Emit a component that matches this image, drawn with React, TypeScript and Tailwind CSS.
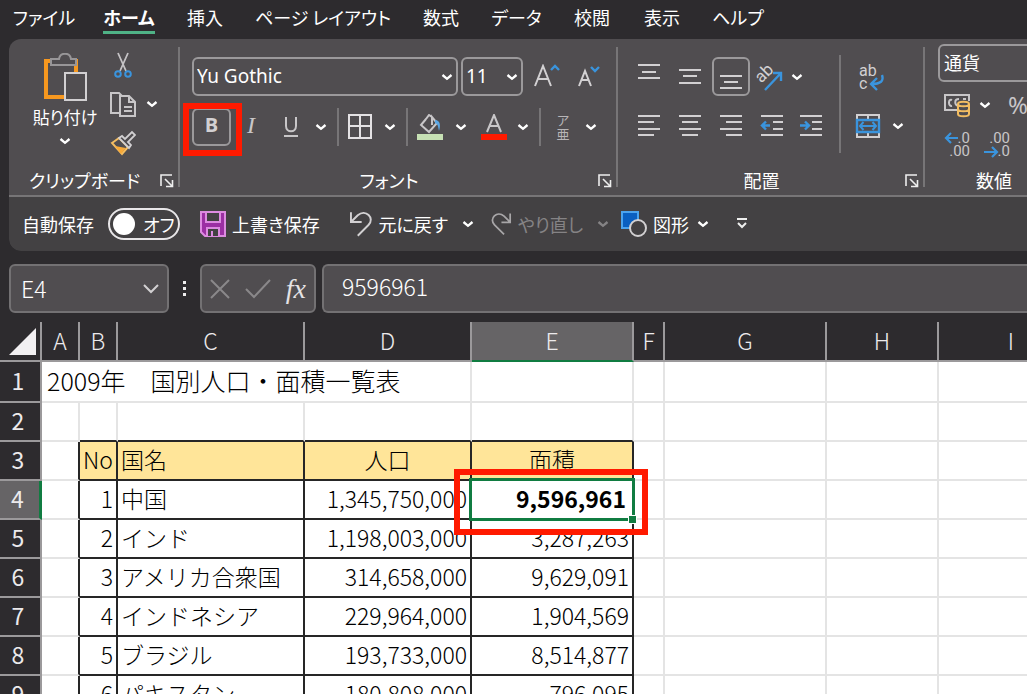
import React from "react";
import cn from "clsx";

// Shared pieces
function Chevron({ className }: { className?: string }) {
  return (
    <svg aria-hidden="true" className={cn("h-2 w-3 shrink-0", className)} fill="none" viewBox="0 0 12 8">
      <path d="M1.5 2 6 5.8 10.5 2" stroke="currentColor" strokeWidth="2.4" />
    </svg>
  );
}

function Launcher({ label }: { label: string }) {
  return (
    <button aria-label={label} className="shrink-0" type="button">
      <svg className="size-[14px]" fill="none" stroke="#eee" strokeWidth="1.6" viewBox="0 0 14 14">
        <path d="M1 12V1h11M5 5l7 7M12.5 6v6.5H6" />
      </svg>
    </button>
  );
}

function IconButton(props: React.ComponentPropsWithoutRef<"button">) {
  const { children, className, ...rest } = props;
  return (
    <button className={cn("flex items-center justify-center", className)} type="button" {...rest}>
      {children}
    </button>
  );
}

function Separator({ className }: { className?: string }) {
  return <span className={cn("w-[2px] justify-self-center bg-[#777577]", className)} />;
}

interface IGroupProps {
  title: string;
  className?: string;
  launcher?: boolean;
  children: React.ReactNode;
}

function Group({ title, className, launcher = true, children }: IGroupProps) {
  return (
    <section aria-label={title} className={cn("flex shrink-0 flex-col", className)}>
      <div className="h-[128px]">{children}</div>
      <div className="flex h-7 items-center pr-1">
        <h2 className="flex-1 pb-[2px] text-center text-lg leading-6">{title}</h2>
        {launcher && <Launcher label={`${title}の設定`} />}
      </div>
    </section>
  );
}

// Ribbon tabs
const TABS = [
  { label: "ファイル", width: "w-[58px]" },
  { label: "ホーム", width: "w-[52px]", active: true },
  { label: "挿入", width: "w-10" },
  { label: "ページ レイアウト", width: "w-[136px]" },
  { label: "数式", width: "w-10" },
  { label: "データ", width: "w-[51px]" },
  { label: "校閲", width: "w-10" },
  { label: "表示", width: "w-10" },
  { label: "ヘルプ", width: "w-[52px]" },
];

function RibbonTabs() {
  return (
    <nav className="flex h-[39px] items-start gap-[30px] overflow-hidden pl-[15px]">
      {TABS.map(({ label, width, active }) => (
        <a
          className={cn("flex h-[34px] shrink-0 justify-center whitespace-nowrap text-lg leading-[34px]", width, {
            "border-b-[3px] border-[#4fb286] font-bold": active,
          })}
          href="#"
          key={label}
        >
          {label}
        </a>
      ))}
    </nav>
  );
}

// Clipboard
function ClipboardGroup() {
  return (
    <Group className="w-[169px]" title="クリップボード">
      <div className="flex pl-4">
        <button className="flex w-[78px] flex-col items-center pl-[2px] pt-[14px]" type="button">
          <svg aria-hidden="true" className="h-[50px] w-[46px]" fill="none" viewBox="0 0 46 50">
            <path d="M12 8H4v36h18M27 8h7v12" stroke="#f7981f" strokeWidth="4" />
            <path d="M12 6h5c1-7 11-7 12 0h5v6H9V6z" fill="#504d50" stroke="#989698" strokeWidth="2" />
            <path d="M23 20h21v27H23z" fill="#504d50" stroke="#d2d0d2" strokeWidth="2" />
          </svg>
          <span className="text-[17px] leading-7">貼り付け</span>
          <Chevron className="mt-[6px]" />
        </button>
        <div className="flex flex-col pl-1 pt-2">
          <IconButton aria-label="切り取り" className="h-9 w-8">
            <svg className="h-[26px] w-[18px]" fill="none" strokeWidth="1.8" viewBox="0 0 18 26">
              <path d="M4 1l8 18M14 1 6 19" stroke="#c4c2c4" />
              <circle cx="4" cy="22" r="2.8" stroke="#3a94dd" strokeWidth="2" />
              <circle cx="14" cy="22" r="2.8" stroke="#3a94dd" strokeWidth="2" />
            </svg>
          </IconButton>
          <div className="flex h-[42px] items-center">
            <IconButton aria-label="コピー" className="h-9 w-8">
              <svg className="h-[26px] w-[28px]" fill="none" stroke="#c8c6c8" strokeWidth="2" viewBox="0 0 28 26">
                <path d="M10 22H2V2h8l4 4" />
                <path d="M11 5h9l6 6v14H11zM20 5v6h6M15 16h8M15 20h8" fill="#504d50" />
              </svg>
            </IconButton>
            <IconButton aria-label="コピーのオプション" className="w-[26px]">
              <Chevron />
            </IconButton>
          </div>
          <IconButton aria-label="書式のコピー/貼り付け" className="h-9 w-8">
            <svg className="size-[26px]" fill="none" viewBox="0 0 26 26">
              <path d="M2 13 9 8l9 9-6 7z" fill="#504d50" stroke="#f3bd62" strokeWidth="2" />
              <path d="m5 16 11 2-5 6z" fill="#f7a938" />
              <path d="m9 8 3-2 3 3 7-7 3 3-7 7 3 3-2 3z" fill="#504d50" stroke="#d2d0d2" strokeWidth="1.8" />
            </svg>
          </IconButton>
        </div>
      </div>
    </Group>
  );
}

// Font
const BOX = "rounded-md border-2 border-[#9b999b]";

function FontGroup() {
  return (
    <Group className="w-[436px]" title="フォント">
      <div className="flex items-center pl-3 pt-[18px]">
        <div className={cn("flex h-[39px] w-[266px] items-center px-[3px]", BOX)}>
          <select aria-label="フォント名" className="flex-1 appearance-none font-['Noto_Sans'] text-[19px] outline-none">
            <option>Yu Gothic</option>
          </select>
          <Chevron />
        </div>
        <div className={cn("ml-[3px] flex h-[39px] w-[62px] items-center px-[3px]", BOX)}>
          <select aria-label="フォント サイズ" className="w-9 flex-1 appearance-none font-['Noto_Sans'] text-[19px] outline-none">
            <option>11</option>
          </select>
          <Chevron />
        </div>
        <IconButton aria-label="フォント サイズの拡大" className="ml-1 h-8 w-10">
          <svg className="h-[26px] w-[28px]" fill="none" strokeWidth="2" viewBox="0 0 28 26">
            <path d="M2 22 10 2l8 20M5 15h10" stroke="#d2d0d2" />
            <path d="m18 6 4-4 4 4" stroke="#3a94dd" strokeWidth="2.400" />
          </svg>
        </IconButton>
        <IconButton aria-label="フォント サイズの縮小" className="ml-1 h-8 w-9">
          <svg className="h-[26px] w-[26px]" fill="none" strokeWidth="2" viewBox="0 0 26 26">
            <path d="M3 22 9 7l6 15M5 16h8" stroke="#d2d0d2" />
            <path d="m15 3 4 4 4-4" stroke="#3a94dd" strokeWidth="2.400" />
          </svg>
        </IconButton>
      </div>
      <div className="grid grid-cols-[39px_40px_40px_20px_14px_30px_30px_4px_42px_19px_48px_10px_24px_22px_34px] items-center pl-3 pt-3">
        <div className="relative">
          <IconButton
            aria-pressed="true"
            className={cn("h-[38px] w-[39px] pb-1 font-['Open_Sans'] text-xl font-bold text-[#d2d0d2]", BOX)}
          >
            B
          </IconButton>
          <span className="pointer-events-none absolute -bottom-[10px] -left-[9px] -right-[11px] -top-[5px] border-[6px] border-[#ff1a00]" />
        </div>
        <IconButton className="pb-1 font-['Liberation_Serif'] text-2xl italic text-[#c8c6c8]">I</IconButton>
        <IconButton aria-label="下線">
          <svg className="h-6 w-4" fill="none" stroke="#c8c6c8" strokeWidth="2" viewBox="0 0 16 24">
            <path d="M3 2v9c0 7 10 7 10 0V2M1 21h14" />
          </svg>
        </IconButton>
        <IconButton aria-label="下線の種類">
          <Chevron />
        </IconButton>
        <Separator className="h-[38px]" />
        <IconButton aria-label="罫線">
          <svg className="size-[26px]" fill="none" stroke="#e4e2e4" strokeWidth="2" viewBox="0 0 26 26">
            <path d="M2 1h22v23H2zM13 1v23M2 12h22" />
          </svg>
        </IconButton>
        <IconButton aria-label="罫線の種類">
          <Chevron />
        </IconButton>
        <Separator className="h-[38px]" />
        <IconButton aria-label="塗りつぶしの色">
          <svg className="size-[26px]" fill="none" viewBox="0 0 26 26">
            <path d="M9 5 4 11l8 7 8-9-5-6v8M9 5l3-4 3 2" stroke="#c8c6c8" strokeWidth="2" />
            <path d="M18 6c5 0 6 5 4 11-1-5-1-7-4-8z" fill="#5ba8e6" />
            <path d="M0 20h26v6H0z" fill="#c6e0b4" />
          </svg>
        </IconButton>
        <IconButton aria-label="塗りつぶしの色の選択">
          <Chevron />
        </IconButton>
        <IconButton aria-label="フォントの色">
          <svg className="size-[26px]" fill="none" viewBox="0 0 26 26">
            <path d="M6 18 13 1l7 17M9 12h8" stroke="#c8c6c8" strokeWidth="2" />
            <path d="M0 20h26v6H0z" fill="#ff1a00" />
          </svg>
        </IconButton>
        <IconButton aria-label="フォントの色の選択">
          <Chevron />
        </IconButton>
        <Separator className="h-[38px]" />
        <IconButton className="flex-col text-[13px] leading-[14px] text-[#b8b6b8]">
          <span>ア</span>
          <span>亜</span>
        </IconButton>
        <IconButton aria-label="ふりがなのオプション">
          <Chevron />
        </IconButton>
      </div>
    </Group>
  );
}

// Alignment
function Lines({ d, children }: { d: string; children?: React.ReactNode }) {
  return (
    <svg aria-hidden="true" className="h-[26px] w-[24px]" fill="none" viewBox="0 0 24 26">
      <path d={d} stroke="#d2d0d2" strokeWidth="2" />
      {children}
    </svg>
  );
}

function AlignmentGroup() {
  return (
    <Group className="w-[305px]" title="配置">
      <div className="flex items-start">
        <div className="pl-[10px] pt-[18px]">
          <div className="grid grid-cols-[41px_41px_41px_41px_10px] items-center justify-items-center">
            <IconButton aria-label="上揃え">
              <Lines d="M1 1h22M5 8h14M1 14h22" />
            </IconButton>
            <IconButton aria-label="上下中央揃え">
              <Lines d="M1 6h22M5 12h14M1 19h22" />
            </IconButton>
            <IconButton aria-label="下揃え" aria-pressed="true" className={cn("h-[39px] w-[38px]", BOX)}>
              <Lines d="M1 12h22M5 18h14M1 24h22" />
            </IconButton>
            <IconButton aria-label="方向" className="pr-1">
              <svg className="size-[30px] overflow-visible" fill="none" viewBox="0 0 30 30">
                <text fill="#d2d0d2" fontFamily="Roboto" fontSize="17" transform="rotate(-45 9 19)" x="5" y="19">
                  ab
                </text>
                <path d="M10 28 26 11M18 11h8v8" stroke="#3a94dd" strokeWidth="2.400" />
              </svg>
            </IconButton>
            <IconButton aria-label="方向のオプション">
              <Chevron />
            </IconButton>
          </div>
          <div className="grid h-[50px] grid-cols-[41px_41px_41px_41px_38px] items-center justify-items-center pt-[10px]">
            <IconButton aria-label="左揃え">
              <Lines d="M1 3h22M1 9h16M1 16h22M1 22h16" />
            </IconButton>
            <IconButton aria-label="中央揃え">
              <Lines d="M1 3h22M4 9h16M1 16h22M4 22h16" />
            </IconButton>
            <IconButton aria-label="右揃え">
              <Lines d="M1 3h22M7 9h16M1 16h22M7 22h16" />
            </IconButton>
            <IconButton aria-label="インデントを減らす">
              <Lines d="M1 3h22M13 9h10M13 16h10M1 22h22">
                <path d="M10 12.500H3M6 8.500l-4 4 4 4" stroke="#3a94dd" strokeWidth="2.400" />
              </Lines>
            </IconButton>
            <IconButton aria-label="インデントを増やす">
              <Lines d="M1 3h22M13 9h10M13 16h10M1 22h22">
                <path d="M1 12.500h8M6 8.500l4 4-4 4" stroke="#3a94dd" strokeWidth="2.400" />
              </Lines>
            </IconButton>
          </div>
        </div>
        <Separator className="ml-[9px] mt-4 h-[98px]" />
        <div className="pl-[14px] pt-[18px]">
          <IconButton aria-label="折り返して全体を表示する" className="relative h-[39px] w-[30px]">
            <span className="w-[22px] text-left font-['Roboto'] text-[16px] leading-[13px] text-[#d2d0d2]">
              ab
              <br />c
            </span>
            <svg className="absolute bottom-[5px] right-0 h-[17px] w-4" fill="none" viewBox="0 0 16 17">
              <path d="M13 1c2 6-1 9-11 9M8 4 2 10l6 6" stroke="#3a94dd" strokeWidth="2.400" />
            </svg>
          </IconButton>
          <div className="flex h-[50px] items-center gap-[11px] pt-[10px]">
            <IconButton aria-label="セルを結合して中央揃え">
              <svg className="h-[26px] w-[26px]" fill="none" viewBox="0 0 26 26">
                <path d="M2 6V2h22v4M2 20v4h22v-4M13 2v4M13 20v4" stroke="#d2d0d2" strokeWidth="2" />
                <path d="M2 7h22v12H2z" stroke="#3a94dd" strokeWidth="2.400" />
                <path d="M5 13h16M8.500 9 5 13l3.500 4M17.500 9l3.500 4-3.500 4" stroke="#3a94dd" strokeWidth="2" />
              </svg>
            </IconButton>
            <IconButton aria-label="結合のオプション">
              <Chevron />
            </IconButton>
          </div>
        </div>
      </div>
    </Group>
  );
}

// Number format
function DecimalDigits({ top, bottom }: { top: string; bottom: string }) {
  return (
    <span className="w-[26px] text-right font-['Roboto'] text-[15px] leading-[13px] text-[#c8c6c8]">
      {top}
      <br />
      {bottom}
    </span>
  );
}

function NumberGroup() {
  return (
    <Group className="w-[142px]" launcher={false} title="数値">
      <div className="pl-[13px] pt-[5px]">
        <div className={cn("flex h-[38px] w-[180px] items-center px-1 pb-[2px]", BOX)}>
          <select aria-label="表示形式" className="flex-1 appearance-none text-lg outline-none">
            <option>通貨</option>
          </select>
        </div>
        <div className="flex h-[46px] items-center pl-[6px]">
          <IconButton aria-label="通貨表示形式">
            <svg className="size-[26px]" fill="none" viewBox="0 0 26 26">
              <path d="M15 18H1V3h24v6" stroke="#c8c6c8" strokeWidth="2" />
              <path d="M8 8c-4-2-4 7 0 6M15 14c-5-1-5-7 0-7M19 7h3" stroke="#c8c6c8" strokeWidth="2" />
              <path
                d="M14 12v10c0 3 11 3 11 0V12c0-3-11-3-11 0 0 3 11 3 11 0M14 17c0 3 11 3 11 0"
                fill="#504d50"
                stroke="#f3bd62"
                strokeWidth="2"
              />
            </svg>
          </IconButton>
          <IconButton aria-label="通貨の選択" className="w-[30px]">
            <Chevron />
          </IconButton>
          <IconButton className="ml-2 font-['Noto_Sans'] text-2xl text-[#c8c6c8]">%</IconButton>
        </div>
        <div className="flex h-[34px] items-center gap-[14px] pl-[6px]">
          <IconButton aria-label="小数点以下の表示桁数を増やす" className="relative">
            <DecimalDigits bottom=".00" top=".0" />
            <svg className="absolute left-0 top-0 h-3 w-[15px]" fill="none" viewBox="0 0 15 12">
              <path d="M14 6H2M7 1 2 6l5 5" stroke="#3a94dd" strokeWidth="2.200" />
            </svg>
          </IconButton>
          <IconButton aria-label="小数点以下の表示桁数を減らす" className="relative">
            <DecimalDigits bottom=".0" top=".00" />
            <svg className="absolute bottom-0 left-0 h-3 w-[15px]" fill="none" viewBox="0 0 15 12">
              <path d="M0 6h13M8 1l5 5-5 5" stroke="#3a94dd" strokeWidth="2.200" />
            </svg>
          </IconButton>
        </div>
      </div>
    </Group>
  );
}

// Quick access toolbar
function QuickAccess() {
  return (
    <div className="flex h-[54px] items-center overflow-hidden whitespace-nowrap rounded-bl-xl bg-[#434143] pl-[13px] text-lg">
      <label className="flex w-[158px] items-center justify-between">
        自動保存
        <input className="sr-only" role="switch" type="checkbox" />
        <span className="flex h-8 w-[72px] items-center gap-2 rounded-full border-2 border-[#e8e6e8] pl-[3px]">
          <span className="size-[22px] rounded-full bg-white" />
          オフ
        </span>
      </label>
      <button className="ml-5 flex w-[121px] items-center gap-[6px]" type="button">
        <svg aria-hidden="true" className="size-[26px]" fill="#9b2fa3" stroke="#dc8be0" strokeWidth="2" viewBox="0 0 26 26">
          <path d="M1 1h24v24H5l-4-4z" />
          <path d="M6 1h14v10H6zM7 25v-8h12v8" fill="#434143" />
          <path d="M12 20v5" />
        </svg>
        上書き保存
      </button>
      <button className="ml-[28px] flex w-[99px] items-center gap-[6px]" type="button">
        <svg aria-hidden="true" className="h-[28px] w-[24px]" fill="none" stroke="#d2d0d2" strokeWidth="2" viewBox="0 0 24 28">
          <path d="M2 2v10h11M2 12 9 5c8-7 18 3 11 10L9 26" />
        </svg>
        元に戻す
      </button>
      <IconButton aria-label="元に戻す履歴" className="ml-[14px]">
        <Chevron />
      </IconButton>
      <button className="ml-[17px] flex w-[92px] items-center gap-[6px] text-[#858385]" type="button">
        <svg aria-hidden="true" className="h-[28px] w-[24px]" fill="none" stroke="#a8a6a8" strokeWidth="2" viewBox="0 0 24 28">
          <path d="M22 2v10H12M22 12l-7-7C7-2-3 8 4 15l11 11" />
        </svg>
        やり直し
      </button>
      <IconButton aria-label="やり直し履歴" className="ml-[14px] text-[#858385]">
        <Chevron />
      </IconButton>
      <button className="ml-3 flex w-[72px] items-center gap-[6px]" type="button">
        <svg aria-hidden="true" className="h-[28px] w-[26px]" viewBox="0 0 26 28">
          <path d="M1 2h16v16H1z" fill="#0a5fc0" stroke="#4ba3ee" strokeWidth="2" />
          <circle cx="17" cy="18" fill="#434143" r="8" stroke="#d2d0d2" strokeWidth="2" />
        </svg>
        図形
      </button>
      <IconButton aria-label="図形の選択" className="ml-1">
        <Chevron />
      </IconButton>
      <IconButton aria-label="ツール バーのカスタマイズ" className="ml-[27px]">
        <svg className="h-[12px] w-3" fill="none" stroke="#eee" strokeWidth="2" viewBox="0 0 12 12">
          <path d="M1 1h10M2 5l4 4 4-4" />
        </svg>
      </IconButton>
    </div>
  );
}

// Name box and formula input
function FormulaBar() {
  const box = "h-[49px] shrink-0 rounded-md border-2 border-[#737173] bg-[#504d50]";
  return (
    <div className="flex items-center pl-[9px] pt-[13px]">
      <div className={cn("flex w-40 items-center pl-[10px] pr-2", box)}>
        <input aria-label="名前ボックス" className="min-w-0 flex-1 text-[23px] font-light outline-none" defaultValue="E4" />
        <svg aria-hidden="true" className="h-[10px] w-4" fill="none" stroke="#d2d0d2" strokeWidth="2" viewBox="0 0 16 10">
          <path d="m1 1 7 7 7-7" />
        </svg>
      </div>
      <svg aria-hidden="true" className="mx-[13px] h-[18px] w-[5px]" fill="#eee" viewBox="0 0 5 18">
        <path d="M1 1h3v3H1zM1 7h3v3H1zM1 13h3v3H1z" />
      </svg>
      <div className={cn("flex w-[116px] items-center justify-between px-2", box)}>
        <IconButton aria-label="キャンセル">
          <svg className="size-5" fill="none" stroke="#8a888a" strokeWidth="2" viewBox="0 0 20 20">
            <path d="m1 1 18 18M19 1 1 19" />
          </svg>
        </IconButton>
        <IconButton aria-label="入力">
          <svg className="h-5 w-[26px]" fill="none" stroke="#8a888a" strokeWidth="2" viewBox="0 0 26 20">
            <path d="m1 10 8 8L25 1" />
          </svg>
        </IconButton>
        <IconButton aria-label="関数の挿入" className="font-['Liberation_Serif'] text-[28px] italic leading-8 text-[#e4e2e4]">
          fx
        </IconButton>
      </div>
      <div className={cn("ml-[6px] flex flex-1 items-center rounded-r-none border-r-0 pb-1 pl-[18px]", box)}>
        <input aria-label="数式バー" className="w-full text-[23px] font-light outline-none" defaultValue="9596961" />
      </div>
    </div>
  );
}

// Worksheet
const COLUMNS = [
  { name: "A", width: "w-[38px]" },
  { name: "B", width: "w-[38px]" },
  { name: "C", width: "w-[187px]" },
  { name: "D", width: "w-[167px]" },
  { name: "E", width: "w-[162px]" },
  { name: "F", width: "w-[31px]" },
  { name: "G", width: "w-[162px]" },
  { name: "H", width: "w-[112px]" },
  { name: "I", width: "w-[146px]" },
];

const COUNTRIES = [
  { name: "中国", population: "1,345,750,000", area: "9,596,961" },
  { name: "インド", population: "1,198,003,000", area: "3,287,263" },
  { name: "アメリカ合衆国", population: "314,658,000", area: "9,629,091" },
  { name: "インドネシア", population: "229,964,000", area: "1,904,569" },
  { name: "ブラジル", population: "193,733,000", area: "8,514,877" },
  { name: "パキスタン", population: "180,808,000", area: "796,095" },
];

function RowHead({ row, selected }: { row: number; selected?: boolean }) {
  return (
    <th
      className={cn("border-b-2 border-b-[#9b999b] pb-1 pr-1 text-center font-normal text-[#eceaec]", {
        "border-r-[3px] border-r-[#107c41] bg-[#666466]": selected,
        "border-r-2 border-r-[#9b999b] bg-[#2d2b2e]": !selected,
      })}
      scope="row"
    >
      {row}
    </th>
  );
}

function Blank({ className }: { className?: string }) {
  return <td className={cn("border-b-2 border-r-2", className || "border-[#e4e4e4]")} />;
}

function Trailing() {
  return (
    <>
      <Blank />
      <Blank />
      <Blank />
      <Blank />
    </>
  );
}

function Cell(props: React.ComponentPropsWithoutRef<"td">) {
  const { children, className, ...rest } = props;
  return (
    <td className={cn("whitespace-nowrap border-b-2 border-r-2 border-[#262626] px-[3px] pb-1", className)} {...rest}>
      {children}
    </td>
  );
}

function Worksheet() {
  return (
    <div className="mt-[9px] min-h-0 flex-1 overflow-hidden bg-white">
      <table className="w-[1085px] table-fixed border-separate border-spacing-0 text-[23px] font-light leading-7 text-black">
        <thead>
          <tr className="h-10 bg-[#2d2b2e] text-[#eceaec]">
            <th aria-label="すべて選択" className="w-[42px] border-b-2 border-r-2 border-[#9b999b]">
              <svg className="ml-[9px] size-[27px]" viewBox="0 0 27 27">
                <path d="M27 0v27H0z" fill="#f2f0f2" />
              </svg>
            </th>
            {COLUMNS.map(({ name, width }) => (
              <th
                className={cn("border-b-2 border-r-2 border-r-[#9b999b] pb-[2px] font-light", width, {
                  "border-b-[#107c41] bg-[#666466]": name === "E",
                  "border-b-[#9b999b]": name !== "E",
                })}
                key={name}
                scope="col"
              >
                {name}
              </th>
            ))}
          </tr>
        </thead>
        <tbody>
          <tr className="h-[41px]">
            <RowHead row={1} />
            <td className="border-b-2 border-r-2 border-[#e4e4e4] pb-1 pl-[5px] text-[25px] leading-7" colSpan={4}>
              2009年　国別人口・面積一覧表
            </td>
            <Blank />
            <Trailing />
          </tr>
          <tr className="h-[39px]">
            <RowHead row={2} />
            <Blank />
            <Blank className="border-b-[#262626] border-r-[#e4e4e4]" />
            <Blank className="border-b-[#262626] border-r-[#e4e4e4]" />
            <Blank className="border-b-[#262626] border-r-[#e4e4e4]" />
            <Blank className="border-b-[#262626] border-r-[#e4e4e4]" />
            <Trailing />
          </tr>
          <tr className="h-[39px]">
            <RowHead row={3} />
            <Blank className="border-b-[#e4e4e4] border-r-[#262626]" />
            <Cell className="bg-[#ffe599]">No</Cell>
            <Cell className="bg-[#ffe599]">国名</Cell>
            <Cell className="bg-[#ffe599] text-center">人口</Cell>
            <Cell className="bg-[#ffe599] text-center">面積</Cell>
            <Trailing />
          </tr>
          {COUNTRIES.map(({ name, population, area }, i) => (
            <tr className="h-[39px]" key={name}>
              <RowHead row={i + 4} selected={i === 0} />
              <Blank className="border-b-[#e4e4e4] border-r-[#262626]" />
              <Cell className="text-right">{i + 1}</Cell>
              <Cell>{name}</Cell>
              <Cell className="text-right">{population}</Cell>
              {i === 0 ? (
                <Cell aria-selected="true" className="relative text-right font-bold">
                  <span className="pr-[3px]">{area}</span>
                  <span className="pointer-events-none absolute -inset-x-[3px] -bottom-[3px] -top-[3px] border-[3px] border-[#107c41]" />
                  <span className="pointer-events-none absolute -bottom-[6px] -right-[5px] size-[9px] border border-white bg-[#107c41]" />
                  <span className="pointer-events-none absolute -bottom-[17px] -left-[18px] -right-4 -top-[12px] border-[6px] border-[#ff1a00]" />
                </Cell>
              ) : (
                <Cell className="text-right">{area}</Cell>
              )}
              <Trailing />
            </tr>
          ))}
        </tbody>
      </table>
    </div>
  );
}

export default function App() {
  return (
    <div className="flex h-screen flex-col overflow-hidden bg-[#2d2b2e] font-['Noto_Sans_CJK_JP',sans-serif] text-white">
      <header className="[font-feature-settings:'palt']">
        <RibbonTabs />
        <div className="ml-[9px] overflow-hidden rounded-l-xl">
          <div className="flex overflow-hidden border-b-2 border-[#777577] bg-[#504d50]">
            <ClipboardGroup />
            <Separator className="mt-2 h-[140px] shrink-0" />
            <FontGroup />
            <Separator className="mt-2 h-[140px] shrink-0" />
            <AlignmentGroup />
            <Separator className="mt-2 h-[140px] shrink-0" />
            <NumberGroup />
          </div>
          <QuickAccess />
        </div>
      </header>
      <FormulaBar />
      <Worksheet />
    </div>
  );
}
